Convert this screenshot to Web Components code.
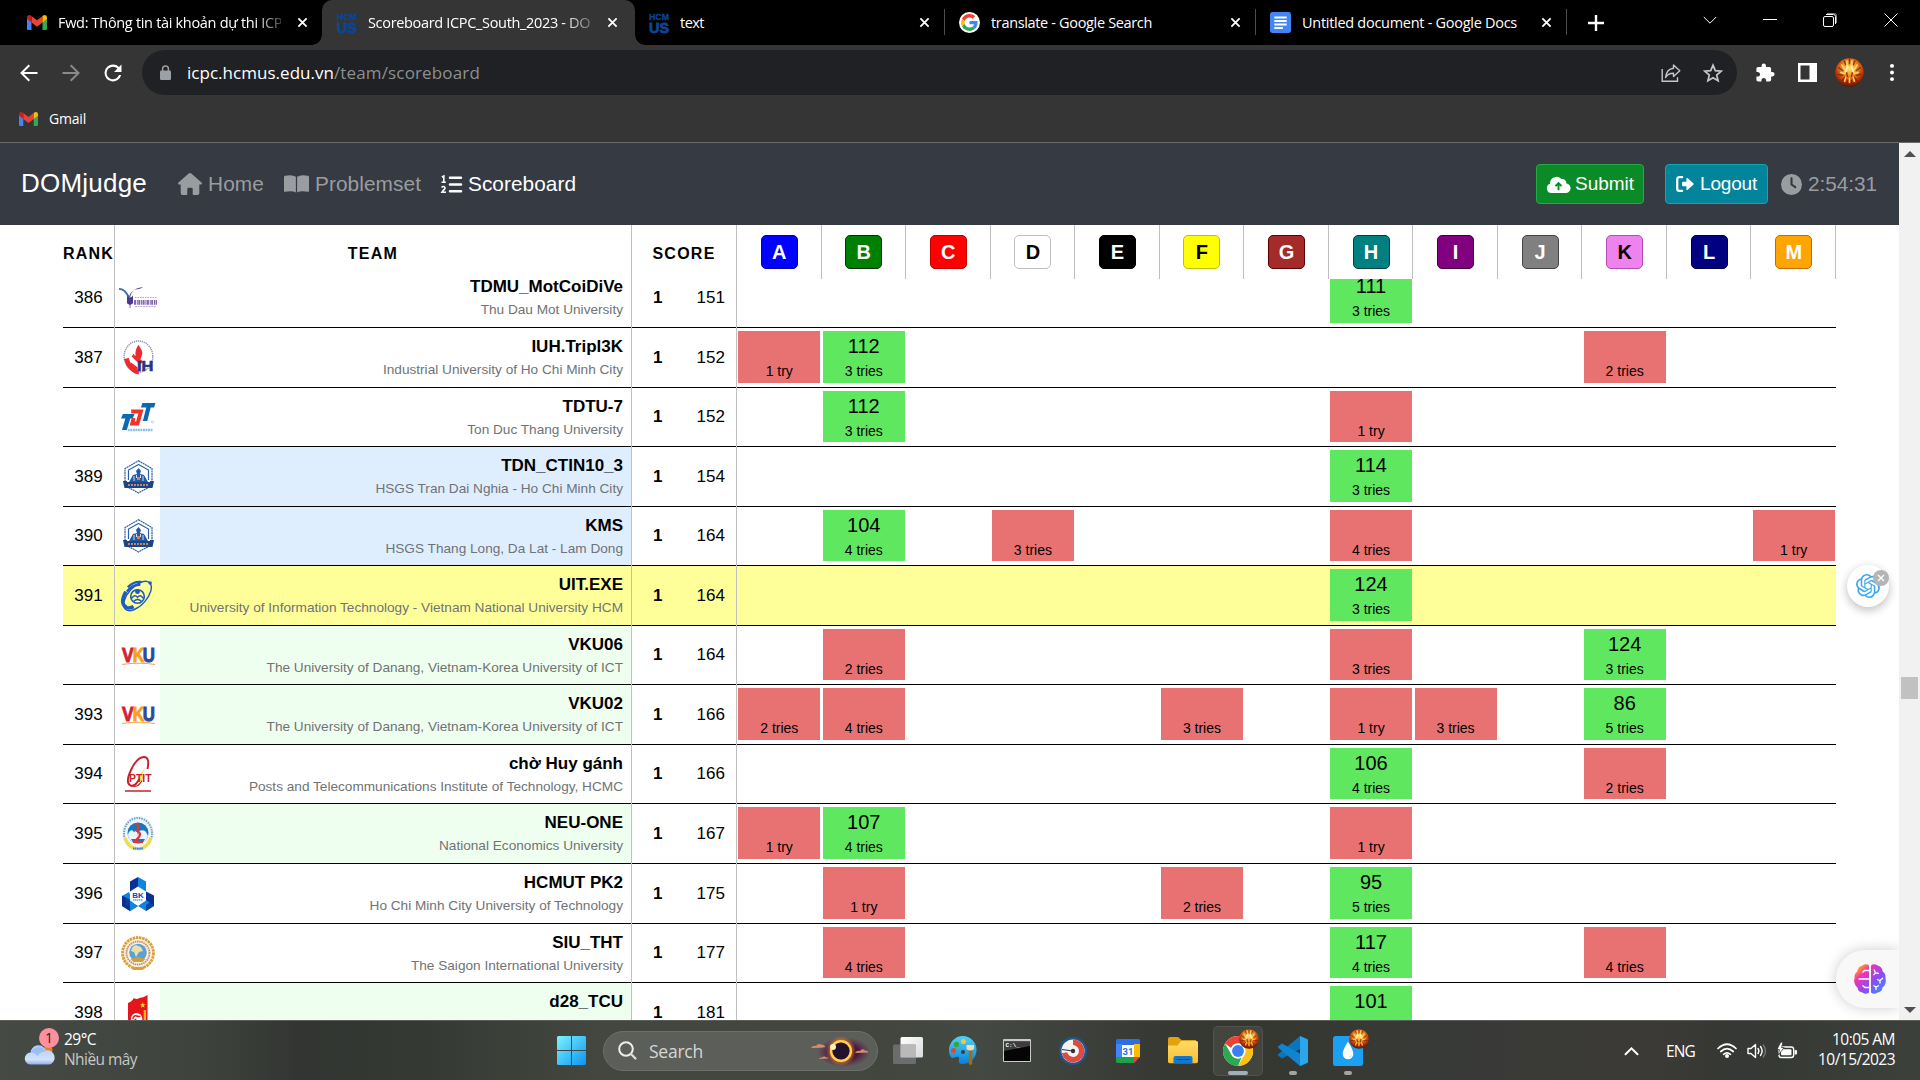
<!DOCTYPE html>
<html lang="vi">
<head>
<meta charset="utf-8">
<title>Scoreboard ICPC_South_2023 - DOMjudge</title>
<style>
html,body{margin:0;width:1920px;height:1080px;overflow:hidden;background:#fff}
body{font-family:"Liberation Sans",Arial,sans-serif}
</style>
</head>
<body>
<desktop-screen></desktop-screen>
<script>
const ICONS = {
gmail:['0 0 24 18','<path fill="#4285f4" d="M0 3v13.5Q0 18 1.6 18H5.4V7.6z"/><path fill="#34a853" d="M24 3v13.5Q24 18 22.4 18H18.6V7.6z"/><path fill="#ea4335" d="M5.4 1.3 12 6.4 18.6 1.3V8.9L12 14 5.4 8.9z"/><path fill="#c5221f" d="M0 3Q0 0 2.6 0 3.7 0 5.4 1.3V8.9L0 4.9z"/><path fill="#fbbc04" d="M24 3Q24 0 21.4 0 20.3 0 18.6 1.3V8.9L24 4.9z"/>'],
hcmus:['0 0 20 21','<text x="0" y="7.8" font-family="Liberation Sans" font-weight="700" font-size="9.5" textLength="20" lengthAdjust="spacingAndGlyphs" fill="#0b4595" stroke="#0b4595" stroke-width=".3">HCM</text><text x="0" y="20.5" font-family="Liberation Sans" font-weight="700" font-size="15.5" textLength="20" lengthAdjust="spacingAndGlyphs" fill="#0b4595" stroke="#0b4595" stroke-width=".9">US</text>'],
google:['0 0 60 60','<circle cx="30" cy="30" r="30" fill="#fff"/><g transform="translate(6 6)"><path fill="#ea4335" d="M24 9.5c3.54 0 6.71 1.22 9.21 3.6l6.85-6.85C35.9 2.38 30.47 0 24 0 14.62 0 6.51 5.38 2.56 13.22l7.98 6.19C12.43 13.72 17.74 9.5 24 9.5z"/><path fill="#4285f4" d="M46.98 24.55c0-1.57-.15-3.09-.38-4.55H24v9.02h12.94c-.58 2.96-2.26 5.48-4.78 7.18l7.73 6c4.51-4.18 7.09-10.36 7.09-17.65z"/><path fill="#fbbc05" d="M10.53 28.59c-.48-1.45-.76-2.99-.76-4.59s.27-3.14.76-4.59l-7.98-6.19C.92 16.46 0 20.12 0 24s.92 7.54 2.56 10.78z"/><path fill="#34a853" d="M24 48c6.48 0 11.93-2.13 15.89-5.81l-7.73-6c-2.15 1.45-4.92 2.3-8.16 2.3-6.26 0-11.57-4.22-13.47-9.91l-7.98 6.19C6.51 42.62 14.62 48 24 48z"/></g>'],
docs:['0 0 22 22','<rect width="22" height="22" rx="2.5" fill="#4285f4"/><path stroke="#fff" stroke-width="2" d="M4.5 5.7h13M4.5 9.4h13M4.5 13.1h13M4.5 16.8h9"/>'],
x:['0 0 12 12','<path stroke="#fff" stroke-width="2" d="M1.5 1.5l9 9m0-9l-9 9"/>'],
plus:['0 0 16 16','<path stroke="#fff" stroke-width="2.4" d="M8 0v16M0 8h16"/>'],
chev:['0 0 14 14','<path stroke="#fff" fill="none" d="M.8 4l6.2 6.2L13.2 4"/>'],
min:['0 0 14 14','<path stroke="#fff" d="M0 6.5h14"/>'],
restore:['0 0 14 14','<rect x=".5" y="3.5" width="10" height="10" rx="1.5" fill="none" stroke="#fff"/><path fill="none" stroke="#fff" d="M3 1.5h7.5a2 2 0 0 1 2 2V11" /><path fill="none" stroke="#888" d="M4 .5h7.5a2 2 0 0 1 2 2V10"/>'],
close:['0 0 14 14','<path stroke="#fff" d="M.5.5l13 13m0-13l-13 13"/>'],
back:['0 0 18 18','<path stroke="#fff" stroke-width="2" fill="none" d="M17.5 9H2M9.3 1.2 1.5 9l7.8 7.8"/>'],
fwd:['0 0 18 18','<path stroke="#8a8a8a" stroke-width="2" fill="none" d="M.5 9H16M8.7 1.2 16.5 9l-7.8 7.8"/>'],
reload:['3.5 3.5 17 17','<path fill="#fff" d="M17.65 6.35A7.958 7.958 0 0 0 12 4a8 8 0 1 0 7.73 10h-2.08A6 6 0 1 1 12 6c1.66 0 3.14.69 4.22 1.78L13 11h7V4l-2.35 2.35z"/>'],
lock:['0 0 11 15','<rect y="5.5" width="11" height="9.5" rx="1.2" fill="#9aa0a6"/><path d="M2.6 6V3.8a2.9 2.9 0 0 1 5.8 0V6" stroke="#9aa0a6" stroke-width="1.5" fill="none"/>'],
share:['0 0 20 20','<path fill="none" stroke="#c4c7c5" stroke-width="1.4" d="M1.2 6v12.3h15.3v-4"/><path fill="none" stroke="#c4c7c5" stroke-width="1.4" stroke-linejoin="round" d="M12.5 2l6.3 5.8-6.3 5.8v-3.4C8.5 10.2 6 11.5 4.6 14.5 5 9.5 8 5.9 12.5 5.300z"/>'],
star:['0 0 20 20','<path fill="none" stroke="#c4c7c5" stroke-width="1.7" d="M10 2.2l2.3 5.4 5.9.5-4.5 3.9 1.4 5.8L10 14.7l-5.1 3.1 1.4-5.8L1.8 8.1l5.9-.5z"/>'],
puzzle:['1.5 .5 22 22','<path fill="#fff" d="M20.5 11H19V7c0-1.1-.9-2-2-2h-4V3.5a2.5 2.5 0 0 0-5 0V5H4c-1.1 0-1.99.9-1.99 2v3.8H3.5c1.49 0 2.7 1.21 2.7 2.7s-1.21 2.7-2.7 2.7H2V20c0 1.1.9 2 2 2h3.8v-1.5c0-1.49 1.21-2.7 2.7-2.7s2.7 1.21 2.7 2.7V22H17c1.1 0 2-.9 2-2v-4h1.5a2.5 2.5 0 0 0 0-5z"/>'],
panel:['0 0 19 19','<path fill="#fff" fill-rule="evenodd" d="M0 0h19v19H0zM2.5 2.5v14h9v-14z"/>'],
dots:['0 0 4 18','<g fill="#fff"><circle cx="2" cy="2" r="2"/><circle cx="2" cy="9" r="2"/><circle cx="2" cy="16" r="2"/></g>'],
avatar:['0 0 30 30','<defs><radialGradient id="f" cx=".5" cy=".36" r=".66"><stop offset="0" stop-color="#ffe07a"/><stop offset=".35" stop-color="#f59a24"/><stop offset=".7" stop-color="#c03c0a"/><stop offset="1" stop-color="#4a0c04"/></radialGradient></defs><circle cx="15" cy="15" r="14.8" fill="url(#f)"/><g fill="none" stroke-linecap="round"><path stroke="#7a1a06" stroke-width="1.4" opacity=".8" d="M15 1v5M9.500 3l1.500 4M20.500 3L19 7M4 10l4 3M26 10l-4 3M3 17l5 1M27 17l-5 1M7 24l3-4M23 24l-3-4M12 28l1-5M18 28l-1-5M12 15l1 4M18 15l-1 4"/><path stroke="#ffd76a" stroke-width="1.5" d="M12.500 3v6M17.500 3v6M7 7l3 5M23 7l-3 5M6 15l4 1M24 15l-4 1M10 24l1-4M20 24l-1-4M15 25v-4"/><path stroke="#fff0a8" stroke-width="2.2" d="M13 9l-2 5M17 9l2 5"/></g>'],
home:['0 0 24 22','<path fill="#9a9d9f" d="M12 0q.7 0 1.3.5L23.5 9.5q.8.8.3 1.6-.4.5-1.2.5h-1.3v8.6q0 1.8-1.8 1.8H15.7q-1 0-1-1v-5q0-1.200-1.200-1.200h-3q-1.200 0-1.200 1.200v5q0 1-1 1H4.500q-1.800 0-1.800-1.800v-8.600H1.400q-.8 0-1.200-.5-.5-.8.3-1.600L10.700.5Q11.300 0 12 0z"/>'],
book:['0 0 24 19','<path fill="#9a9d9f" d="M11.4 1.8v16.7Q8 16.3 1 17.8q-1 .1-1-.9V2Q0 1 1 .8 8-.8 11.400 1.800zM12.600 1.800v16.700q3.400-2.200 10.400-.7 1 .1 1-.9V2q0-1-1-1.200-7-1.600-10.400 1z"/>'],
list:['0 0 21 19','<path stroke="#fff" stroke-width="2.5" stroke-linecap="round" d="M9 2.8h11M9 9.5h11M9 16.2h11"/><path stroke="#fff" stroke-width="1.6" fill="none" d="M.8 2l2-1v6M.5 7.2h4.3M.6 12.5q1-1.3 2.5-.9 2 1-.3 3.300L1 17.300h4"/>'],
cloud:['0 0 24 18','<path fill="#fff" d="M5 18a5 5 0 0 1-1.8-9.7A6 6 0 0 1 3.2 7 6.7 6.7 0 0 1 15 3.3 4.3 4.3 0 0 1 20.2 8 5 5 0 0 1 19 18z"/><path stroke="#0a8b27" stroke-width="2" fill="none" d="M12 15V8M8.8 10.8 12 7.5l3.2 3.3"/>'],
logout:['0 0 19 17','<path stroke="#fff" stroke-width="2.4" fill="none" stroke-linecap="round" d="M6.5 1.3H3.5Q1.3 1.3 1.3 3.5v10q0 2.2 2.2 2.2h3"/><path fill="#fff" d="M6.5 7q0-1 1-1H11V3q0-1.5 1.3-.5l6 5.2q.8.8 0 1.6l-6 5.2Q11 15.5 11 14v-3H7.5q-1 0-1-1z"/>'],
clock:['0 0 22 22','<circle cx="11" cy="11" r="11" fill="#9a9d9f"/><path stroke="#353941" stroke-width="2.2" stroke-linecap="round" fill="none" d="M11 4.5V11l4 2.8"/>'],
gpt:['0 0 24 24','<path fill="#3ba7ee" d="M22.2819 9.8211a5.9847 5.9847 0 0 0-.5157-4.9108 6.0462 6.0462 0 0 0-6.5098-2.9A6.0651 6.0651 0 0 0 4.9807 4.1818a5.9847 5.9847 0 0 0-3.9977 2.9 6.0462 6.0462 0 0 0 .7427 7.0966 5.98 5.98 0 0 0 .511 4.9107 6.051 6.051 0 0 0 6.5146 2.9001A5.9847 5.9847 0 0 0 13.2599 24a6.0557 6.0557 0 0 0 5.7718-4.2058 5.9894 5.9894 0 0 0 3.9977-2.9001 6.0557 6.0557 0 0 0-.7475-7.0729zm-9.022 12.6081a4.4755 4.4755 0 0 1-2.8764-1.0408l.1419-.0804 4.7783-2.7582a.7948.7948 0 0 0 .3927-.6813v-6.7369l2.02 1.1686a.071.071 0 0 1 .038.052v5.5826a4.504 4.504 0 0 1-4.4945 4.4944zm-9.6607-4.1254a4.4708 4.4708 0 0 1-.5346-3.0137l.142.0852 4.783 2.7582a.7712.7712 0 0 0 .7806 0l5.8428-3.3685v2.3324a.0804.0804 0 0 1-.0332.0615L9.74 19.9502a4.4992 4.4992 0 0 1-6.1408-1.6464zM2.3408 7.8956a4.485 4.485 0 0 1 2.3655-1.9728V11.6a.7664.7664 0 0 0 .3879.6765l5.8144 3.3543-2.0201 1.1685a.0757.0757 0 0 1-.071 0l-4.8303-2.7865A4.504 4.504 0 0 1 2.3408 7.872zm16.5963 3.8558L13.1038 8.364 15.1192 7.2a.0757.0757 0 0 1 .071 0l4.8303 2.7913a4.4944 4.4944 0 0 1-.6765 8.1042v-5.6772a.79.79 0 0 0-.407-.667zm2.0107-3.0231l-.142-.0852-4.7735-2.7818a.7759.7759 0 0 0-.7854 0L9.409 9.2297V6.8974a.0662.0662 0 0 1 .0284-.0615l4.8303-2.7866a4.4992 4.4992 0 0 1 6.6802 4.66zM8.3065 12.863l-2.02-1.1638a.0804.0804 0 0 1-.038-.0567V6.0742a4.4992 4.4992 0 0 1 7.3757-3.4537l-.142.0805L8.704 5.459a.7948.7948 0 0 0-.3927.6813zm1.0976-2.3654l2.602-1.4998 2.6069 1.4998v2.9994l-2.5974 1.4997-2.6067-1.4997Z"/>'],
badgex:['0 0 16 16','<circle cx="8" cy="8" r="8" fill="#b4b4b4"/><path stroke="#fff" stroke-width="1.3" d="M5 5l6 6m0-6l-6 6"/>'],
brain:['0 0 32 30','<defs><linearGradient id="b" x1="0" y1="0" x2="1" y2="1"><stop offset="0" stop-color="#ffa51e"/><stop offset=".12" stop-color="#ffa51e"/><stop offset=".3" stop-color="#f034b4"/><stop offset=".6" stop-color="#8a4df2"/><stop offset="1" stop-color="#2f9dff"/></linearGradient></defs><path fill="url(#b)" d="M15 1.5v27Q12 31 8.5 28.5 4 28 3.5 23.5-1 20 .5 14 0 9.500 3.300 7.500 4 2.500 8.500 1.500 12-1 15 1.500zM17 1.500v27q3 2.500 6.500 0 4.500-.5 5-5 4.500-3.500 3-9.500.5-4.500-2.800-6.500-.7-5-5.200-6Q20-1 17 1.500z"/><path fill="none" stroke="#fff" stroke-width="1.3" d="M15 6.5h-4.500L8.500 8.500M15 15H4.500M15 23.500h-4l-2.500-2M20 5.500l1.500 3.500 3.500.5M21.500 9l-2 2M29 14l-3 2.500-3-1M26 16.500v3M19.500 21.500l2.500 1.500 3-1.500M22 23v3"/>'],
weather:['0 0 30 20','<defs><linearGradient id="w" x2="0" y2="1"><stop offset="0" stop-color="#a9cbfa"/><stop offset=".75" stop-color="#d3e2f8"/><stop offset="1" stop-color="#8eb0ef"/></linearGradient></defs><circle cx="23" cy="5" r="4.5" fill="#f57a1c"/><path fill="url(#w)" d="M6 19.5A6 6 0 0 1 5.500 7.500 8 8 0 0 1 21 5.500a7 7 0 0 1 3 14z"/><path fill="#8fb4f3" opacity=".7" d="M5.500 7.500Q10 7 12.500 11q3-5 8.500-4.500-4-5-9-4-4 1-6.500 5z"/>'],
win:['0 0 29 29','<defs><linearGradient id="n" x2="1" y2="1"><stop offset="0" stop-color="#7df3fb"/><stop offset="1" stop-color="#0a94f5"/></linearGradient></defs><path fill="url(#n)" d="M1 0h13v13.900H0V1zM15 0h13l1 1v12.900H15zM0 15h14v14H1l-1-1zM15 15h14v13l-1 1H15z"/>'],
search:['0 0 19 19','<circle cx="8" cy="8" r="6.8" fill="none" stroke="#eee" stroke-width="2"/><path stroke="#ddd" stroke-width="2.3" stroke-linecap="round" d="M13 13l4.500 4.500"/>'],
eclipse:['0 0 60 30','<defs><radialGradient id="e"><stop offset="0" stop-color="#2a1030"/><stop offset=".55" stop-color="#4a1a40"/><stop offset="1" stop-color="#5a2a55" stop-opacity="0"/></radialGradient><radialGradient id="h"><stop offset=".6" stop-color="#ff9a1a"/><stop offset="1" stop-color="#ff7a10" stop-opacity="0"/></radialGradient></defs><ellipse cx="34" cy="16" rx="27" ry="15" fill="url(#e)"/><circle cx="31" cy="15" r="15" fill="url(#h)" opacity=".8"/><circle cx="31" cy="15" r="9.800" fill="none" stroke="#ffcf50" stroke-width="2.600"/><circle cx="31" cy="15" r="8.600" fill="#22122c"/><circle cx="23" cy="11" r="3" fill="#fff1b8"/><g fill="#d98a70"><path d="M1 12q2-3 5-2 2-3 5-1.500 3-.5 4.500 2.500l-4 .8zM9 23q1-2 3-1.500 2-2 4-.3 2 0 2.500 1.300zM45 17q2-3 5-2 2-3 5-.5 3 0 3.500 2z"/></g>'],
tasks:['0 0 30 27','<defs><linearGradient id="t" x2="1" y2="1"><stop offset="0" stop-color="#fff"/><stop offset="1" stop-color="#dadada"/></linearGradient></defs><rect x="7.5" width="22.5" height="20.5" rx="1.5" fill="url(#t)"/><rect y="7.5" width="23" height="19.5" rx="1.5" fill="#77777a" opacity=".78"/><path fill="#b9b9b9" d="M7.5 7.5H23v13H7.500z"/>'],
paint:['0 0 28 29','<defs><linearGradient id="p" x2="0" y2="1"><stop offset="0" stop-color="#4fd3f5"/><stop offset="1" stop-color="#0a7fd9"/></linearGradient></defs><path fill="url(#p)" d="M14 0a14 14 0 1 1-1 28Q9 28 10 24t-3-3q-2 1-4 1Q0 20 0 14.500A14 14 0 0 1 14 0z"/><circle cx="4.500" cy="14.500" r="2.500" fill="#e0492c"/><circle cx="7.500" cy="8.500" r="2.700" fill="#3da52e"/><circle cx="14.500" cy="5.500" r="2.500" fill="#fcc62a"/><circle cx="14" cy="16" r="2" fill="#32403d"/><path fill="#a8690f" d="M19.800 14h3.400v14q-1.700 2-3.400 0z"/><path fill="#f3dcb4" d="M17.500 9h7.500v4q-3.700 3-7.500 0z"/>'],
cmd:['0 0 28 23','<rect width="28" height="23" rx="1" fill="#c9c9c9"/><rect x="1" y="2.500" width="26" height="19.500" fill="#050505"/><path fill="#3d3d3d" d="M1 2.500h26V7L1 12z"/><text x="2.500" y="8" font-family="Liberation Mono" font-size="6" font-weight="700" fill="#fff">C:\\_</text>'],
timer:['0 0 28 28','<circle cx="14" cy="14" r="14" fill="#20568e"/><circle cx="14" cy="14" r="11.500" fill="#f3f3f3"/><path fill="none" stroke="#dd4a3f" stroke-width="5.500" d="M14 5.300a8.700 8.700 0 1 1-8.500 10.500"/><path stroke="#333" d="M3 12.500l11 1.500"/><circle cx="14" cy="14" r="2.200" fill="#333"/>'],
cal:['0 0 24 24','<path fill="#2a6fe8" d="M1.500 0H22.500Q24 0 24 1.500V6H0V1.500Q0 0 1.500 0z"/><path fill="#4285f4" d="M0 5h6v13H0z"/><path fill="#fbbc04" d="M18 5h6v13h-6z"/><path fill="#1aa34a" d="M0 18h18v6H1.500Q0 24 0 22.500z"/><path fill="#ea4335" d="M18 18h6l-6 6z"/><path fill="#fff" d="M6 6h12v12H6z"/><text x="12" y="15.800" text-anchor="middle" font-family="Roboto" font-weight="700" font-size="9.500" fill="#2a6fe8">31</text>'],
folder:['0 0 30 27','<defs><linearGradient id="o" x2="0" y2="1"><stop offset="0" stop-color="#ffdc6a"/><stop offset="1" stop-color="#fbbd2c"/></linearGradient></defs><path fill="#e3a10d" d="M0 2Q0 0 2 0h8l3.500 3H28v8H0z"/><path fill="url(#o)" d="M0 8.500h9.500L13 4h15.500Q30 4 30 5.500v19q0 1.700-1.700 1.700H1.700Q0 26.200 0 24.500z"/><path fill="#1277cf" d="M5.500 26.200v-5q0-2.200 2.200-2.200h14.600q2.200 0 2.200 2.200v5z"/><path stroke="#0a4d8f" d="M8.500 22.500h13"/>'],
chrome:['0 0 48 48','<circle cx="24" cy="24" r="24" fill="#fff"/><path fill="#ea4335" d="M24 0A24 24 0 0 1 44.800 12H24a12 12 0 0 0-11 7L3.200 12A24 24 0 0 1 24 0z"/><path fill="#fbc116" d="M44.800 12A24 24 0 0 1 24 48l10.400-18A12 12 0 0 0 34.400 18 12 12 0 0 0 24 12z"/><path fill="#2da94f" d="M3.200 12l10.400 18A12 12 0 0 0 24 36q3 0 5.500-1.300L24 48A24 24 0 0 1 3.200 12z"/><circle cx="24" cy="24" r="12" fill="#fff"/><circle cx="24" cy="24" r="9.500" fill="#3d7ff0"/>'],
vscode:['0 0 30 30','<path fill="#0a74bd" d="M22 0l8 3v6L4 22.500 0 19.500q-.3-.8.500-1.500z"/><path fill="#0f85d0" d="M0 10.500L4 7.500 30 22v5l-8 3L.5 12q-.8-.7-.5-1.500z"/><path fill="#2ba6ec" d="M22 0l6.800 3.200Q30 3.800 30 5v20q0 1.200-1.200 1.800L22 30z"/>'],
drop:['0 0 30 30','<rect width="30" height="30" rx="2.500" fill="#1ba0f3"/><path fill="#fff" d="M15 5.500q5.300 8.500 5.300 12.500a5.300 5.300 0 0 1-10.600 0q0-4 5.300-12.500z"/><path fill="#bfe3fb" d="M15.500 21q2.500-.5 2.800-3.500 1 4.500-2.800 3.500z"/>'],
up:['0 0 15 10','<path stroke="#fff" stroke-width="2" fill="none" stroke-linecap="round" d="M1.500 8.300l6-6 6 6"/>'],
wifi:['0 0 20 15','<g fill="none" stroke="#fff" stroke-width="1.700" stroke-linecap="round"><path d="M1 5.500Q10-3 19 5.500M3.800 8.500q6.200-5.600 12.400 0M6.600 11.300q3.400-2.900 6.800 0"/></g><circle cx="10" cy="13" r="2" fill="#fff"/>'],
sound:['0 0 20 16','<path fill="none" stroke="#fff" stroke-width="1.400" stroke-linejoin="round" d="M1 5.500h3L8.500 1.500v13L4 10.500H1z"/><path fill="none" stroke="#fff" stroke-width="1.400" stroke-linecap="round" d="M11 5.500q1.800 2.500 0 5M13.500 3.500q3.300 4.500 0 9"/><path fill="none" stroke="#777" stroke-width="1.400" d="M16 1.500q5 6.500 0 13"/>'],
batt:['0 0 21 17','<rect x="2" y="5" width="15.500" height="10.500" rx="2.500" fill="none" stroke="#fff" stroke-width="1.400"/><rect x="4.200" y="7.200" width="11" height="6.100" rx="1" fill="#fff"/><path fill="#fff" d="M18.500 8h1.500q1 0 1 1v2.500q0 1-1 1h-1.500z"/><path fill="#fff" stroke="#363936" stroke-width=".8" d="M4 0L0 7.500h2.500L1.500 13 7.500 5.500H4.700L6.200.5z"/>'],
/* university crests */
tdmu:['0 0 38 22','<path fill="none" stroke="#3f6fae" stroke-width="2" d="M0 2q6 0 10 9"/><path fill="#5a4a9c" d="M10 10Q13 1 24 0q-2 2-9 3-3 3-4 8z"/><path fill="#4b3a8c" d="M8 9q3 4 6 0v8l-3 2-3-2z"/><path stroke="#7a6bb3" d="M11 18v4"/><path stroke="#b79ccb" stroke-dasharray="1.500 1" d="M16 11h22"/><path stroke="#8565ac" stroke-width="5" stroke-dasharray="2 .8 1 .5" d="M15 16h23"/><path stroke="#b7a8d2" stroke-dasharray="2 .7" d="M16 20.500h21"/>'],
iuh:['0 0 32 36','<ellipse cx="16" cy="17" rx="14.800" ry="16" fill="none" stroke="#8f92bd" stroke-width="1.500" stroke-dasharray="1.300 .8"/><path fill="#ee2a2e" d="M16 5q4 6 4 9l-2 6 3 2-1 2h-4L9 17l2-3q1 3 2 2-1-5 3-11z"/><path fill="none" stroke="#ee2a2e" stroke-width="5" d="M3.500 19q3 12 13 14"/><path fill="#ee2a2e" d="M8 23l7 5v7q-6-2-8-6z"/><text x="14.500" y="31.500" font-family="Liberation Sans" font-weight="700" font-size="15" textLength="17" lengthAdjust="spacingAndGlyphs" fill="#283583" stroke="#283583" stroke-width=".6">IH</text>'],
tdt:['0 0 36 29','<g fill="#0b69b1"><path d="M2 11h12l-2 4.500H9.500L6 27H1l3.500-11.500H0z"/><path d="M22 0h13.500l-1.500 4.500h-3.500L27 18h-4.500L26 4.500h-5.500z"/></g><path fill="none" stroke="#f0342a" stroke-width="4" d="M10.500 8.500h10l-3.500 12h-5.500l1.500-5.500"/><path stroke="#8bc1e4" stroke-width="2.500" stroke-dasharray="2 .6" d="M7 27h26"/><circle cx="32.500" cy="19" r="1.200" fill="none" stroke="#9cc" stroke-width=".6"/>'],
hsgs:['0 0 31 34','<g fill="none" stroke="#2d61a6"><path stroke-width="1.200" stroke-dasharray="2 .5" d="M15.500.8L29 8.500v17L15.500 33 2 25.500v-17z"/><path stroke-width="1.200" d="M15.500 4.500L25.500 10v10M15.500 4.500L5.500 10v10"/></g><path fill="#235aa5" d="M15.500 8l2.500 3-1 3 4 1 4 7H6l4-7 4-1-1-3z"/><path stroke="#cfe0f3" d="M11 16v5M20 16v5M13.500 15v3M17.500 15v3"/><path fill="#1d4583" d="M0 21h4v1h23v-1h4l-1.500 7H1.500z"/><path stroke="#e7a070" stroke-width="1.300" stroke-dasharray="2 1" d="M5 25h21"/><path fill="#ef7d34" d="M14 17h3v3h-3z"/>'],
uit:['0 0 35 30','<g fill="none" stroke="#1f5bc4"><ellipse cx="17" cy="15.500" rx="18.500" ry="9.500" transform="rotate(-48 17 15.500)" stroke-width="1.500"/><path stroke-width="3.600" d="M5 11Q-2 24 6 27.500q3 1.200 7-1"/><path stroke-width="2.400" d="M7 6.500Q13 0 21 1M6 11q7-8 14-7"/><circle cx="17" cy="16" r="7" stroke-width="1.700"/><path stroke-width="1.500" d="M11 18q3-5 6-1 3-4 6 1M13 21q4-4 8 0"/></g><circle cx="17" cy="11" r="2.500" fill="#1f5bc4"/><circle cx="30" cy="2" r="1.800" fill="#1f5bc4"/>'],
vku:['0 0 34 19','<g font-family="Liberation Sans" font-weight="700" font-size="21" stroke-width="1"><text x="0" y="15.500" textLength="12" lengthAdjust="spacingAndGlyphs" fill="#d51f35" stroke="#d51f35">V</text><text x="11" y="15.500" textLength="12" lengthAdjust="spacingAndGlyphs" fill="#f9a01b" stroke="#f9a01b">K</text><text x="21.500" y="15.500" textLength="12.500" lengthAdjust="spacingAndGlyphs" fill="#2a4a9a" stroke="#2a4a9a">U</text></g><path fill="none" stroke="#f7a84a" stroke-width="1.200" d="M0 18.500Q17 16 34 18.500"/>'],
ptit:['0 0 27 36','<path fill="none" stroke="#c62127" stroke-width="1.900" d="M22.500 13Q25 1 19 1 12 1 6 14 0 27 5.500 29.500q5 1.500 9-7"/><path fill="none" stroke="#c62127" stroke-width="1.200" d="M6 29.500q7 3 11-5"/><path fill="#ffe23b" d="M20 12l-7 9 3 .5L12 29l8-9-3-.7z"/><text x="4" y="25.500" font-family="Liberation Sans" font-weight="700" font-size="11.500" textLength="22.500" lengthAdjust="spacingAndGlyphs" fill="#c62127">PTIT</text><path stroke="#c62127" stroke-width="1.500" d="M0 35h26"/>'],
neu:['0 0 32 35','<ellipse cx="16" cy="17.500" rx="16" ry="17.500" fill="#eef5fb"/><ellipse cx="16" cy="17.500" rx="14" ry="15.500" fill="none" stroke="#6f9fd2" stroke-width="2" stroke-dasharray="1.500 1"/><path fill="none" stroke="#f0df3c" stroke-width="3.200" d="M3 22q4 10 11 10.500M29 22q-4 10-11 10.500"/><circle cx="16" cy="17" r="10.500" fill="#1677bd"/><path fill="#e9f4fb" d="M6 20q0-5 4-6l2 2 3-2 1 6 1-5q5-2 7 1l2 4Q24 27 16 27T6 20z"/><path fill="#1677bd" d="M9 23h14l-2 3H11z"/><path fill="none" stroke="#e8303a" stroke-width="2.200" d="M14 8l3 2-2 5q5 2 2 6t-6 5h10"/><path stroke="#2a84c6" stroke-width="2" stroke-dasharray="1.500 .6" d="M11 32.500h10"/>'],
bk:['0 0 32 34','<path fill="#0a2f96" d="M8 4.500L16 0v13l-8 2z"/><path fill="#0d86dd" d="M16 0l8 4.500V15l-8-2z"/><path fill="#0d86dd" d="M0 19l7-4 5 12-4 2-8-5z"/><path fill="#0a2f96" d="M0 19l4 2v8l-4-2zM0 25l8 4v5l-8-5z"/><path fill="#0a2f96" d="M8 25l8 4-8 5z"/><path fill="#0a2f96" d="M0 18.500l8 4V34l-8-5z" opacity=".85"/><path fill="#0d86dd" d="M8 24l8 5-8 5z"/><path fill="#0a2f96" d="M32 18.500l-8-4V25l8 4z"/><path fill="#0d86dd" d="M16 29l8-6 8 6-8 5z"/><path fill="#0a2f96" d="M24 34l8-5v-6l-8 5z" opacity=".8"/><path fill="#fff" d="M16 9.500l8 5v9l-8 5-8-5v-9z"/><text x="16" y="20.500" text-anchor="middle" font-family="Liberation Sans" font-weight="700" font-size="8" fill="#0a4db0">BK</text><path stroke="#5aa9e4" stroke-width="1.300" stroke-dasharray="1.500 .5" d="M11 23h10"/>'],
siu:['0 0 34 34','<ellipse cx="17" cy="17" rx="15.500" ry="15.500" fill="#faf1dc" stroke="#d9a035" stroke-width="2.800" stroke-dasharray="2.500 .7"/><circle cx="17" cy="17" r="11.500" fill="none" stroke="#c98a7a" stroke-width="1.800" stroke-dasharray="1.500 .7"/><circle cx="17" cy="16.500" r="8.800" fill="#5da2cf"/><path fill="#e8dfae" d="M15 9l5 2 2 4-4 1-3 5-2-5-3-1q1-5 5-6z"/><path fill="#c8a14a" d="M9.500 23l7.500-2 7.500 2-3 3h-9z"/><path fill="#d9a035" d="M10 31h14l-2 3H12z"/>'],
tcu:['0 0 21 36','<path fill="#e3161c" d="M0 8q5-2 6-5 3 2 6 0 4 0 8.500-3v36H0z"/><path fill="#fff" d="M0 0h6q0 4-6 7z"/><path fill="#ffd91a" d="M15.500 7l.8 2.200h2.200l-1.800 1.400.7 2.200-1.900-1.300-1.900 1.300.7-2.200-1.800-1.400h2.200z"/><path fill="#f6b61c" d="M16.500 15h2.500v20h-2.500z"/><circle cx="9" cy="24" r="6" fill="#fff"/><path fill="none" stroke="#e3161c" stroke-width="1.500" d="M5 24q1-4 4-3t4 0M7 24l5 4"/>']
};
const def = (n, css, html, after) => customElements.define(n, class extends HTMLElement {
  connectedCallback() {
    if (this.shadowRoot) return;
    const r = this.attachShadow({mode: 'open'});
    r.innerHTML = `<style>*,:host{box-sizing:border-box}${css}</style>` + (typeof html === 'function' ? html(this) : html);
    if (after) after(this, r);
  }
});

def('ui-icon', ':host{display:block;flex:none}svg{display:block;overflow:visible}', e => {
  const [vb, body] = ICONS[e.getAttribute('name')];
  return `<svg width="${e.getAttribute('w')}" height="${e.getAttribute('h') || e.getAttribute('w')}" viewBox="${vb}" preserveAspectRatio="none">${body}</svg>`;
});

/* Text run tracked to a given width, standing in for the narrower system font. */
def('fit-text', ':host{display:block;flex:none;white-space:nowrap}span{display:inline-block}', '<span><slot></slot></span>', (e, r) => {
  const w = +e.getAttribute('w'), s = r.querySelector('span'), n = [...e.textContent].length;
  s.style.letterSpacing = ((w - s.getBoundingClientRect().width) / n).toFixed(3) + 'px';
});

def('browser-tab', `
:host{display:flex;align-items:center;height:45px;width:var(--w);position:relative;padding-left:var(--pl);background:#000;color:#fff;font:14.5px "Open Sans","Noto Sans",sans-serif}
:host([active]){background:#353535;border-radius:10px 10px 0 0;z-index:1}
:host([active])::before,:host([active])::after{content:"";position:absolute;bottom:0;width:10px;height:10px}
:host([active])::before{left:-10px;background:radial-gradient(circle at 0 0,#0000 9.5px,#353535 10px)}
:host([active])::after{right:-10px;background:radial-gradient(circle at 100% 0,#0000 9.5px,#353535 10px)}
.t{width:223px;margin-left:11px;overflow:hidden}
:host([fade]) .t{-webkit-mask:linear-gradient(90deg,#000 88%,#0004 100%);mask:linear-gradient(90deg,#000 88%,#0004 100%)}
.x{position:absolute;right:var(--xr);top:17px}
:host([sep])::after{content:"";position:absolute;right:0;top:9px;width:1px;height:26px;background:#4c4c4c}`,
'<slot name="icon"></slot><div class="t"><slot></slot></div><ui-icon class="x" name="x" w="11"></ui-icon>');

def('browser-chrome', `
:host{display:block;height:143px;background:#353535;border-bottom:1px solid #6a6a6a;color:#fff;font-family:"Open Sans","Noto Sans",sans-serif}
.tabs{display:flex;height:45px;background:#000;align-items:center}
.plus{margin-left:21px}
.win{margin-left:auto;display:flex;gap:46.300px;margin-right:22.500px;margin-bottom:6px}
.bar{display:flex;align-items:center;height:55px;padding-left:20px}
.bar .i{margin-right:24px}
.omni{display:flex;align-items:center;width:1595px;height:45px;margin-left:-4px;border-radius:23px;background:#202124;padding:0 14px 0 18px;font-size:17px}
.omni .u{display:flex;margin-left:16px;padding-bottom:1px}.g{color:#8d8f91}
.r{display:flex;margin-left:auto;gap:22px}
.ext{display:flex;align-items:center;margin-left:19px;gap:23px}
.bm{display:flex;align-items:center;padding:0 0 0 19px;height:37px;gap:11px;font-size:14px}`,
`<div class="tabs">
<browser-tab fade style="--w:322px;--pl:27px;--xr:14.500px"><ui-icon slot="icon" name="gmail" w="20" h="15"></ui-icon><fit-text w="233">Fwd: Thông tin tài khoản dự thi ICPC</fit-text></browser-tab>
<browser-tab active fade style="--w:313px;--pl:15px;--xr:17px"><ui-icon slot="icon" name="hcmus" w="20" h="21"></ui-icon><fit-text w="235">Scoreboard ICPC_South_2023 - DOM</fit-text></browser-tab>
<browser-tab sep style="--w:310px;--pl:14px;--xr:15.500px"><ui-icon slot="icon" name="hcmus" w="20" h="21"></ui-icon><fit-text w="24">text</fit-text></browser-tab>
<browser-tab sep style="--w:311px;--pl:14px;--xr:15px"><ui-icon slot="icon" name="google" w="21"></ui-icon><fit-text w="161">translate - Google Search</fit-text></browser-tab>
<browser-tab sep style="--w:311px;--pl:14px;--xr:15px"><ui-icon slot="icon" name="docs" w="21" h="21"></ui-icon><fit-text w="215">Untitled document - Google Docs</fit-text></browser-tab>
<ui-icon class="plus" name="plus" w="16"></ui-icon>
<div class="win"><ui-icon name="chev" w="14"></ui-icon><ui-icon name="min" w="14"></ui-icon><ui-icon name="restore" w="14"></ui-icon><ui-icon name="close" w="14"></ui-icon></div></div>
<div class="bar"><ui-icon class="i" name="back" w="18"></ui-icon><ui-icon class="i" name="fwd" w="18"></ui-icon><ui-icon class="i" name="reload" w="18"></ui-icon>
<div class="omni"><ui-icon name="lock" w="11" h="15"></ui-icon><div class="u"><fit-text w="147">icpc.hcmus.edu.vn</fit-text><fit-text class="g" w="146">/team/scoreboard</fit-text></div>
<div class="r"><ui-icon name="share" w="20"></ui-icon><ui-icon name="star" w="20"></ui-icon></div></div>
<div class="ext"><ui-icon name="puzzle" w="19"></ui-icon><ui-icon name="panel" w="19"></ui-icon><ui-icon name="avatar" w="29" style="margin:0 3px 0 -5px"></ui-icon><ui-icon name="dots" w="4" h="17"></ui-icon></div></div>
<div class="bm"><ui-icon name="gmail" w="19" h="14"></ui-icon><fit-text w="37">Gmail</fit-text></div>`);

def('nav-bar', `
:host{display:flex;align-items:center;height:82px;background:#363a43;color:#fff;padding:0 22px 0 21px;font-size:20.800px}
.brand{font-size:26px;margin-right:31px;padding-bottom:2px}
.l{display:flex;align-items:center;color:#9a9d9f}.l.on{color:#fff}
.l ui-icon{margin-right:6px}
.btn{display:flex;align-items:center;height:40px;border-radius:4px;border:1px solid;font-size:19px}
.s{width:108px;background:#0a8b27;border-color:#28a745;margin-left:auto;padding-left:10px;gap:5px}
.o{width:103px;background:#02849b;border-color:#17a2b8;margin:0 13px 0 21px;padding-left:10px;gap:6px}`,
`<fit-text class="brand" w="126">DOMjudge</fit-text>
<div class="l" style="margin-right:20px"><ui-icon name="home" w="24" h="22"></ui-icon><fit-text w="56">Home</fit-text></div>
<div class="l" style="margin-right:20px"><ui-icon name="book" w="25" h="18"></ui-icon><fit-text w="106">Problemset</fit-text></div>
<div class="l on"><ui-icon name="list" w="21" h="19"></ui-icon><fit-text w="108">Scoreboard</fit-text></div>
<div class="btn s"><ui-icon name="cloud" w="23" h="17"></ui-icon><fit-text w="59">Submit</fit-text></div>
<div class="btn o"><ui-icon name="logout" w="18" h="16"></ui-icon><fit-text w="57">Logout</fit-text></div>
<div class="l"><ui-icon name="clock" w="21" h="21"></ui-icon><fit-text w="69">2:54:31</fit-text></div>`);

const COLS = 'grid-template-columns:52px 45px 472px 105px repeat(13,minmax(0,1fr))';
const PROBS = [['A','#00f','#0000b3','#fff'],['B','#008000','#003500','#fff'],['C','#f00','#c40000','#fff'],['D','#fff','#c0c0c0','#000'],['E','#000','#000','#fff'],['F','#ff0','#c0c000','#000'],['G','#a52a2a','#5c0000','#fff'],['H','#008080','#004040','#fff'],['I','#800080','#400040','#fff'],['J','#808080','#444','#fff'],['K','#ee82ee','#b44cb4','#000'],['L','#000080','#000040','#fff'],['M','#ffa500','#c46a00','#fff']];
def('problem-badge', `:host{display:flex;align-items:center;justify-content:center;width:37px;height:34px;border-radius:5px;border:1px solid var(--b);background:var(--c);color:var(--t);font:700 20px "Liberation Sans",Arial,sans-serif}`, '<slot></slot>');
def('board-head', `
:host{display:grid;${COLS};height:54px;font:700 16px "Liberation Sans",Arial,sans-serif;letter-spacing:1.250px}
div{border-right:1px solid #bfbfbf;display:flex;justify-content:center;align-items:center;padding-top:4px;white-space:nowrap}
.p{padding:0 0 0 1px;letter-spacing:0}
.team{grid-column:span 2}`,
`<div>RANK</div><div class="team">TEAM</div><div>SCORE</div>` + PROBS.map(p => `<div class="p"><problem-badge style="--c:${p[1]};--b:${p[2]};--t:${p[3]}">${p[0]}</problem-badge></div>`).join(''));

def('score-cell', `
:host{display:block;margin:3px 1.250px 4px;text-align:center;color:#000;background:#60e760}
:host([wrong]){background:#e87272}
b{display:block;font-weight:400;font-size:20px;line-height:24px;height:24px;padding-top:3px}
i{display:block;font-style:normal;font-size:14px;line-height:16px;padding-top:8px}`,
e => `<b>${e.getAttribute('time') || ''}</b><i>${e.getAttribute('tries')}</i>`);

def('score-row', `
:host{display:grid;${COLS};height:var(--h);font:17px "Liberation Sans",Arial,sans-serif;color:#000;background:var(--row,#fff);border-bottom:1px solid #000}
.c{display:flex;align-items:center;justify-content:center;border-right:1px solid #c0c0c0;margin-bottom:-1px;padding-bottom:1px}
.logo{display:flex;align-items:center;justify-content:center;padding-left:1px}
.team{text-align:right;border-right:1px solid #c0c0c0;margin-bottom:-1px;background:linear-gradient(var(--bg,#0000),var(--bg,#0000)) 0 0/100% calc(100% - 1px) no-repeat;padding:9px 8px 0 0;white-space:nowrap}
.team b{display:block;line-height:20px}
.team span{display:block;font-size:13.640px;line-height:16px;margin-top:5px;color:#6f7376}
.sc{justify-content:flex-start;padding-left:21px}.sc b{width:43.500px}`,
e => { const d = e.data; let h = '';
  for (const p of PROBS) { const c = d.c[p[0]];
    h += c ? `<score-cell ${c[0] ? `time="${c[0]}"` : 'wrong'} tries="${c[1] === 1 ? '1 try' : c[1] + ' tries'}"></score-cell>` : '<div></div>'; }
  return `<div class="c">${d.r}</div><div class="logo"><ui-icon name="${d.l[0]}" w="${d.l[1]}" h="${d.l[2]}"></ui-icon></div><div class="team"><b>${d.t}</b><span>${d.u}</span></div><div class="c sc"><b>1</b>${d.s}</div>` + h; });

const B = '#deeeff', G = '#efffef';
const VK = 'The University of Danang, Vietnam-Korea University of ICT';
const ROWS = [
{r:386,l:['tdmu',38,21],t:'TDMU_MotCoiDiVe',u:'Thu Dau Mot University',s:151,c:{H:[111,3]}},
{r:387,l:['iuh',31,35],t:'IUH.Tripl3K',u:'Industrial University of Ho Chi Minh City',s:152,c:{A:[0,1],B:[112,3],K:[0,2]}},
{r:'',l:['tdt',35,29],t:'TDTU-7',u:'Ton Duc Thang University',s:152,c:{B:[112,3],H:[0,1]}},
{r:389,l:['hsgs',31,34],bg:B,t:'TDN_CTIN10_3',u:'HSGS Tran Dai Nghia - Ho Chi Minh City',s:154,c:{H:[114,3]}},
{r:390,l:['hsgs',31,34],bg:B,t:'KMS',u:'HSGS Thang Long, Da Lat - Lam Dong',s:164,c:{B:[104,4],D:[0,3],H:[0,4],M:[0,1]}},
{r:391,l:['uit',34,29],row:'#ffff99',t:'UIT.EXE',u:'University of Information Technology - Vietnam National University HCM',s:164,c:{H:[124,3]}},
{r:'',l:['vku',33,19],bg:G,t:'VKU06',u:VK,s:164,c:{B:[0,2],H:[0,3],K:[124,3]}},
{r:393,l:['vku',33,19],bg:G,t:'VKU02',u:VK,s:166,c:{A:[0,2],B:[0,4],F:[0,3],H:[0,1],I:[0,3],K:[86,5]}},
{r:394,l:['ptit',27,36],t:'chờ Huy gánh',u:'Posts and Telecommunications Institute of Technology, HCMC',s:166,c:{H:[106,4],K:[0,2]}},
{r:395,l:['neu',32,35],bg:G,t:'NEU-ONE',u:'National Economics University',s:167,c:{A:[0,1],B:[107,4],H:[0,1]}},
{r:396,l:['bk',32,34],t:'HCMUT PK2',u:'Ho Chi Minh City University of Technology',s:175,c:{B:[0,1],F:[0,2],H:[95,5]}},
{r:397,l:['siu',34,34],t:'SIU_THT',u:'The Saigon International University',s:177,c:{B:[0,4],H:[117,4],K:[0,4]}},
{r:398,l:['tcu',20,36],bg:G,t:'d28_TCU',u:'Tele Communications University',s:181,c:{H:[101,2]}}];
const HS = [60,60,59,60,59,60,59,60,59,60,60,59,60];
def('score-board', `
:host{display:block;width:1773px;margin-left:63px;height:795px;overflow:hidden}
board-head{position:relative;z-index:1;background:#fff}
.rows{height:741px;overflow:hidden}.rows>:first-child{margin-top:-11px}`,
'<board-head></board-head><div class="rows"></div>', (e, r) => {
  const box = r.querySelector('.rows');
  ROWS.forEach((d, i) => { const x = document.createElement('score-row'); x.data = d;
    x.style.cssText = `--h:${HS[i]}px;${d.bg ? `--bg:${d.bg};` : ''}${d.row ? `--row:${d.row}` : ''}`; box.append(x); });
});

def('scroll-bar', `
:host{display:flex;flex-direction:column;align-items:center;width:21px;height:877px;background:#f1f1f1}
.u{border:6px solid transparent;border-top:0;border-bottom:6px solid #505050;margin-top:8px}
.t{width:17px;height:22px;background:#c1c1c1;margin-top:520px}
.d{border:6px solid transparent;border-bottom:0;border-top:6px solid #505050;margin:auto 0 7px}`, '<div class="u"></div><div class="t"></div><div class="d"></div>');

def('float-gpt', `:host{position:absolute;left:1847px;top:565px;width:42px;height:42px;border-radius:50%;background:#fff;box-shadow:0 3px 10px #0004;display:flex;align-items:center;justify-content:center}.b{position:absolute;left:26px;top:5px}`,
'<ui-icon name="gpt" w="24"></ui-icon><ui-icon class="b" name="badgex" w="16"></ui-icon>');
def('float-brain', `:host{position:absolute;left:1836px;top:950px;width:63px;height:58px;padding-left:18px;border-radius:29px 0 0 29px;background:#f8f8f8;box-shadow:0 0 14px #0003;clip-path:inset(-20px 0 -20px -20px);display:flex;align-items:center}`,
'<ui-icon name="brain" w="32" h="30"></ui-icon>');

def('task-app', `:host{display:flex;flex-direction:column;align-items:center;justify-content:center;position:relative;width:50px;height:50px;border-radius:5px}
:host([on]){background:#ffffff12;box-shadow:inset 0 0 0 1px #ffffff14}
.o{position:absolute;left:26px;top:3px}
.d{position:absolute;bottom:1px;width:8px;height:4px;border-radius:2px;background:#a3a5a2}
:host([on]) .d{width:20px;background:#9fb0b6}`,
e => `<slot></slot>${e.hasAttribute('user') ? '<ui-icon class="o" name="avatar" w="20"></ui-icon>' : ''}${e.hasAttribute('run') ? '<div class="d"></div>' : ''}`);

def('task-bar', `
:host{display:flex;align-items:center;height:60px;border-top:1px solid #5a5d58;color:#fff;font:15.500px "Open Sans","Noto Sans",sans-serif;background:linear-gradient(90deg,#454a44 0,#3f433e 200px,#323531 300px,#343934 420px,#43473f 600px,#42463f 900px,#444943 980px,#373935 1150px,#34372f 1250px,#383a37 1420px,#3c3a37 1640px,#353834 1740px,#3c403a 1920px)}
.w{position:relative;margin:8px 9px 0 25px}
.n{position:absolute;left:14px;top:-17px;width:20px;height:20px;border-radius:50%;background:#ff8f9d;color:#222;font-size:14px;line-height:20px;text-align:center}
.two{line-height:20px;padding-bottom:3px}
.two .g{color:#c6c8c5}
.pill{display:flex;align-items:center;width:275px;height:40px;border-radius:20px;background:#5c5f59;border:1px solid #6d706a;margin:0 7px 0 17px;padding:0 7px 0 14px;font-size:17.500px;color:#d6d6d4}
.apps{display:flex;align-items:center}
.tray{display:flex;align-items:center;margin-left:auto;padding-right:25px}`,
`<div class="w"><ui-icon name="weather" w="30" h="20"></ui-icon><div class="n">1</div></div>
<div class="two"><fit-text w="32">29°C</fit-text><fit-text class="g" w="73">Nhiều mây</fit-text></div>
<ui-icon name="win" w="29" style="margin-left:420px"></ui-icon>
<div class="pill"><ui-icon name="search" w="19"></ui-icon><fit-text w="54" style="margin-left:12px">Search</fit-text><ui-icon name="eclipse" w="60" h="30" style="margin-left:auto"></ui-icon></div>
<div class="apps">
<task-app style="margin:0 5px 0 -2px"><ui-icon name="tasks" w="30" h="27"></ui-icon></task-app>
<task-app style="margin-right:4px"><ui-icon name="paint" w="28" h="29"></ui-icon></task-app>
<task-app style="margin-right:6px"><ui-icon name="cmd" w="28" h="23"></ui-icon></task-app>
<task-app style="margin-right:5px"><ui-icon name="timer" w="28"></ui-icon></task-app>
<task-app style="margin-right:5px"><ui-icon name="cal" w="24"></ui-icon></task-app>
<task-app style="margin-right:5px"><ui-icon name="folder" w="30" h="27"></ui-icon></task-app>
<task-app on user run style="margin-right:5px"><ui-icon name="chrome" w="30"></ui-icon></task-app>
<task-app run style="margin-right:5px"><ui-icon name="vscode" w="30"></ui-icon></task-app>
<task-app user run><ui-icon name="drop" w="30"></ui-icon></task-app></div>
<div class="tray"><ui-icon name="up" w="15" h="10" style="margin-right:27px"></ui-icon><fit-text w="29" style="margin-right:22px">ENG</fit-text>
<ui-icon name="wifi" w="20" h="15" style="margin-right:10px"></ui-icon><ui-icon name="sound" w="20" h="16" style="margin-right:10px"></ui-icon><ui-icon name="batt" w="20" h="17" style="margin-right:21px"></ui-icon>
<div class="two" style="display:flex;flex-direction:column;align-items:flex-end"><fit-text w="63">10:05 AM</fit-text><fit-text w="77">10/15/2023</fit-text></div></div>`);

def('desktop-screen', `
:host{display:flex;flex-direction:column;width:1920px;height:1080px;overflow:hidden;position:relative}
.page{display:flex;height:877px;background:#fff}.main{width:1899px;height:877px}`,
`<browser-chrome></browser-chrome>
<div class="page"><div class="main"><nav-bar></nav-bar><score-board></score-board></div><scroll-bar></scroll-bar></div>
<task-bar></task-bar><float-gpt></float-gpt><float-brain></float-brain>`);
</script>
</body>
</html>
